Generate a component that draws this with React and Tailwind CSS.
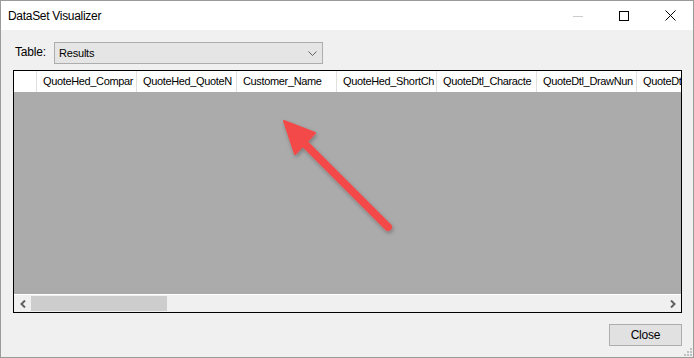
import React from 'react';

// header labels as far as they show in the 100px columns
const columns = [
  'QuoteHed_Compar',
  'QuoteHed_QuoteN',
  'Customer_Name',
  'QuoteHed_ShortCh',
  'QuoteDtl_Characte',
  'QuoteDtl_DrawNun',
  'QuoteDt',
];

const App = () => {
  return (
    <div
      className="relative w-[694px] h-[358px] border border-[#9b9b9b] bg-[#f0f0f0] flex flex-col overflow-hidden text-black"
      style={{ fontFamily: '"Liberation Sans", Arial, sans-serif' }}
    >
      {/* Title bar */}
      <div className="h-[29px] bg-white flex items-center shrink-0">
        <div className="pl-[7px] text-[12px] tracking-[-0.3px] flex-1">DataSet Visualizer</div>
        <div className="flex items-center h-full">
          <div className="w-[46px] h-full flex items-center justify-center">
            <svg width="10" height="10" viewBox="0 0 10 10">
              <line x1="0" y1="5.5" x2="10" y2="5.5" stroke="#cccccc" strokeWidth="1" />
            </svg>
          </div>
          <div className="w-[46px] h-full flex items-center justify-center">
            <svg width="10" height="10" viewBox="0 0 10 10">
              <rect x="0.5" y="0.5" width="9" height="9" fill="none" stroke="#000" strokeWidth="1" />
            </svg>
          </div>
          <div className="w-[46px] h-full flex items-center justify-center">
            <svg width="11" height="11" viewBox="0 0 11 11">
              <path d="M0.5 0.5 L10.5 10.5 M10.5 0.5 L0.5 10.5" stroke="#000" strokeWidth="1" />
            </svg>
          </div>
        </div>
      </div>

      {/* Body */}
      <div className="flex-1 flex flex-col pl-[12px] pr-[11px] pt-[12px]">
        <div className="flex items-center h-[22px]">
          <span className="text-[12px] tracking-[-0.2px] w-[41px] pl-[2px] -mt-[2px]">Table:</span>
          <div className="w-[269px] h-[22px] bg-[#e5e5e5] border border-[#adadad] flex items-center pl-[4px] pr-[5px]">
            <span className="flex-1 text-[11px] tracking-[-0.2px]">Results</span>
            <svg width="9" height="5" viewBox="0 0 9 5">
              <polyline points="0.5,0.5 4.5,4.5 8.5,0.5" fill="none" stroke="#606060" strokeWidth="1" />
            </svg>
          </div>
        </div>

        {/* Grid */}
        <div className="mt-[6px] h-[243px] border border-black flex flex-col overflow-hidden">
          <div className="h-[21px] bg-white flex shrink-0 overflow-hidden">
            <div className="w-[23px] shrink-0 border-r border-[#e0e0e0]" />
            {columns.map((c) => (
              <div
                key={c}
                className="w-[100px] shrink-0 border-r border-[#e0e0e0] pl-[6px] text-[11px] tracking-[-0.35px] whitespace-nowrap overflow-hidden flex items-center"
              >
                {c}
              </div>
            ))}
          </div>
          <div className="flex-1 bg-[#ababab]" />
          <div className="h-[18px] border-t border-white bg-[#f0f0f0] flex items-center shrink-0">
            <div className="w-[17px] h-full flex items-center justify-center">
              <svg width="6" height="8" viewBox="0 0 6 8">
                <polyline points="5,0.5 1.5,4 5,7.5" fill="none" stroke="#606060" strokeWidth="2" />
              </svg>
            </div>
            <div className="w-[136px] h-[15px] bg-[#cdcdcd]" />
            <div className="flex-1" />
            <div className="w-[17px] h-full flex items-center justify-center">
              <svg width="6" height="8" viewBox="0 0 6 8">
                <polyline points="1,0.5 4.5,4 1,7.5" fill="none" stroke="#606060" strokeWidth="2" />
              </svg>
            </div>
          </div>
        </div>

        <div className="flex justify-end mt-[11px]">
          <button className="w-[73px] h-[22px] bg-[#e1e1e1] border border-[#adadad] text-[12px] tracking-[-0.2px]">
            Close
          </button>
        </div>
      </div>

      {/* Resize grip */}
      <svg className="absolute right-[1px] bottom-[1px]" width="8" height="8" viewBox="0 0 8 8">
        <rect x="6" y="0" width="2" height="2" fill="#c0c0c0" />
        <rect x="3" y="3" width="2" height="2" fill="#c0c0c0" />
        <rect x="6" y="3" width="2" height="2" fill="#c0c0c0" />
        <rect x="0" y="6" width="2" height="2" fill="#c0c0c0" />
        <rect x="3" y="6" width="2" height="2" fill="#c0c0c0" />
        <rect x="6" y="6" width="2" height="2" fill="#c0c0c0" />
      </svg>

      {/* Red annotation arrow */}
      <svg className="absolute left-0 top-0 pointer-events-none" width="694" height="358" viewBox="0 0 694 358">
        <defs>
          <filter id="sh" x="-20%" y="-20%" width="140%" height="140%">
            <feDropShadow dx="1" dy="2" stdDeviation="2" floodColor="#000" floodOpacity="0.3" />
          </filter>
        </defs>
        <g filter="url(#sh)">
          <line x1="387" y1="226" x2="300" y2="139" stroke="#f44848" strokeWidth="8" strokeLinecap="round" />
          <polygon points="283,120 314,132 294,153" fill="#f44848" stroke="#f44848" strokeWidth="2" strokeLinejoin="round" />
        </g>
      </svg>
    </div>
  );
};

export default App;
